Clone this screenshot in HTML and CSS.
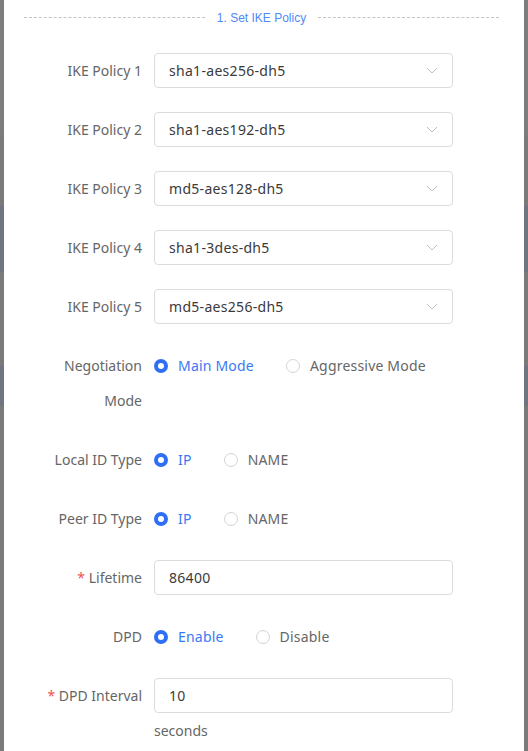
FILE: index.html
```html
<!DOCTYPE html>
<html>
<head>
<meta charset="utf-8">
<link rel="stylesheet" href="styles.css">
</head>
<body>
<div class="modal">
  <div class="divider"><span class="dash"></span><span class="divider-text">1. Set IKE Policy</span><span class="dash"></span></div>
  <form class="form">
    <div class="item">
      <label class="label">IKE Policy 1</label>
      <div class="control select"><span>sha1-aes256-dh5</span><svg class="chev" width="12" height="7" viewBox="0 0 12 7"><path d="M1 1l5 5 5-5" fill="none" stroke="#bfbfbf" stroke-width="1"/></svg></div>
    </div>
    <div class="item">
      <label class="label">IKE Policy 2</label>
      <div class="control select"><span>sha1-aes192-dh5</span><svg class="chev" width="12" height="7" viewBox="0 0 12 7"><path d="M1 1l5 5 5-5" fill="none" stroke="#bfbfbf" stroke-width="1"/></svg></div>
    </div>
    <div class="item">
      <label class="label">IKE Policy 3</label>
      <div class="control select"><span>md5-aes128-dh5</span><svg class="chev" width="12" height="7" viewBox="0 0 12 7"><path d="M1 1l5 5 5-5" fill="none" stroke="#bfbfbf" stroke-width="1"/></svg></div>
    </div>
    <div class="item">
      <label class="label">IKE Policy 4</label>
      <div class="control select"><span>sha1-3des-dh5</span><svg class="chev" width="12" height="7" viewBox="0 0 12 7"><path d="M1 1l5 5 5-5" fill="none" stroke="#bfbfbf" stroke-width="1"/></svg></div>
    </div>
    <div class="item">
      <label class="label">IKE Policy 5</label>
      <div class="control select"><span>md5-aes256-dh5</span><svg class="chev" width="12" height="7" viewBox="0 0 12 7"><path d="M1 1l5 5 5-5" fill="none" stroke="#bfbfbf" stroke-width="1"/></svg></div>
    </div>
    <div class="item">
      <label class="label">Negotiation Mode</label>
      <div class="radios">
        <span class="radio on"><i></i>Main Mode</span>
        <span class="radio"><i></i>Aggressive Mode</span>
      </div>
    </div>
    <div class="item">
      <label class="label">Local ID Type</label>
      <div class="radios">
        <span class="radio on"><i></i>IP</span>
        <span class="radio"><i></i>NAME</span>
      </div>
    </div>
    <div class="item">
      <label class="label">Peer ID Type</label>
      <div class="radios">
        <span class="radio on"><i></i>IP</span>
        <span class="radio"><i></i>NAME</span>
      </div>
    </div>
    <div class="item">
      <label class="label"><em>*</em> Lifetime</label>
      <div class="control input">86400</div>
    </div>
    <div class="item">
      <label class="label">DPD</label>
      <div class="radios">
        <span class="radio on"><i></i>Enable</span>
        <span class="radio"><i></i>Disable</span>
      </div>
    </div>
    <div class="item last">
      <label class="label"><em>*</em> DPD Interval</label>
      <div class="stack">
        <div class="control input">10</div>
        <div class="unit">seconds</div>
      </div>
    </div>
  </form>
</div>
</body>
</html>
```
FILE: styles.css
```css
html, body {
  margin: 0;
  padding: 0;
}
body {
  width: 528px;
  height: 751px;
  overflow: hidden;
  background: linear-gradient(to bottom, #7d7d7d 0, #7d7d7d 135px, #7a7a7a 135px, #7a7a7a 205px, #6f7680 205px, #6f7680 272px, #7a7a7a 272px, #7a7a7a 365px, #6f7680 365px, #6f7680 405px, #7a7a7a 405px, #7a7a7a 100%);
  font-family: "Noto Sans", "Liberation Sans", Arial, sans-serif;
  font-size: 14px;
  color: #666;
}
.modal {
  margin: 0 4px;
  height: 751px;
  background: #fff;
  padding: 0 25px 0 20px;
}
.divider {
  display: flex;
  align-items: center;
  height: 35px;
  gap: 12px;
  font-family: "Liberation Sans", Arial, sans-serif;
}
.dash {
  flex: 1;
  height: 0;
  border-top: 1px dashed #c4c4c4;
}
.divider-text {
  font-size: 12px;
  color: #4f8af6;
}
.form {
  margin: 18px 0 0 18px;
}
.item {
  display: flex;
  align-items: flex-start;
  margin-bottom: 24px;
}
.label {
  width: 100px;
  padding-right: 12px;
  text-align: right;
  line-height: 35px;
  color: #666;
}
.label em {
  font-style: normal;
  color: #f0524f;
}
.control {
  box-sizing: border-box;
  width: 299px;
  height: 35px;
  border: 1px solid #dcdcdc;
  border-radius: 4px;
  padding: 0 14px;
  display: flex;
  align-items: center;
  justify-content: space-between;
  color: #3a3a3a;
  letter-spacing: 0.3px;
}
.chev {
  margin-right: 0;
}
.radios {
  display: flex;
  align-items: center;
  height: 35px;
  gap: 32px;
}
.radio {
  display: flex;
  align-items: center;
  color: #666;
  letter-spacing: 0.2px;
}
.radio i {
  box-sizing: border-box;
  width: 14px;
  height: 14px;
  border-radius: 50%;
  border: 1px solid #d4d4d4;
  margin-right: 10px;
  background: #fff;
}
.radio.on {
  color: #3a78f5;
}
.radio.on i {
  border: 4.5px solid #2f6ff6;
  background: #fff;
}
.unit {
  line-height: 35px;
  color: #666;
}
```
